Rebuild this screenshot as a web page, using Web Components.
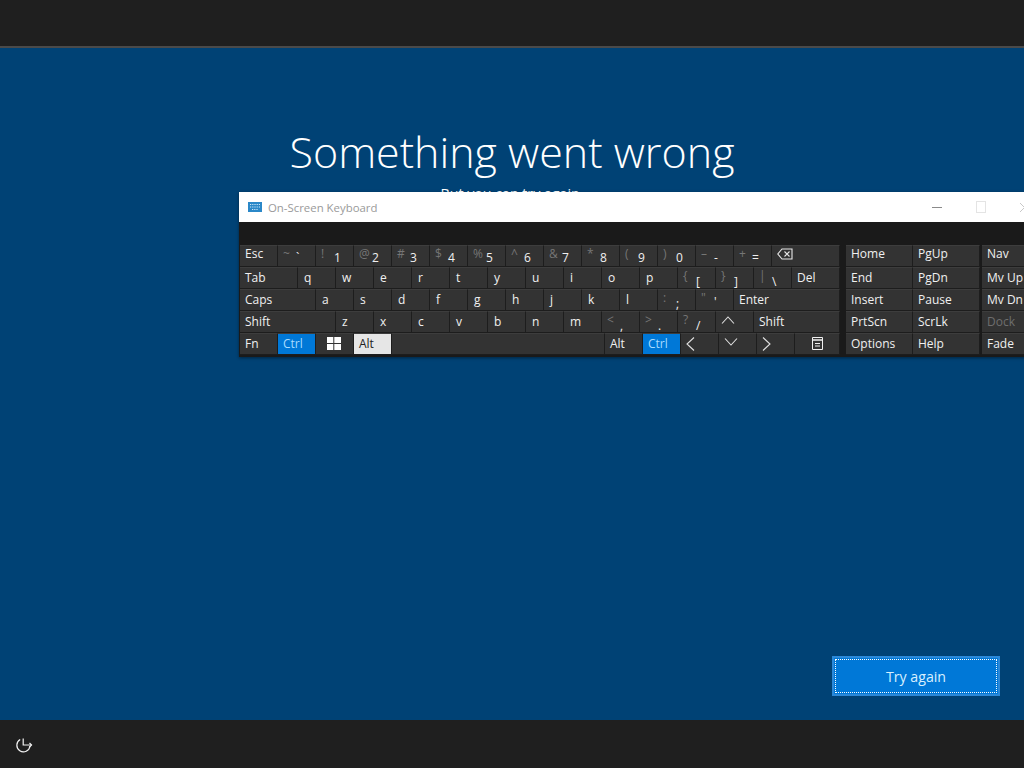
<!DOCTYPE html>
<html><head><meta charset="utf-8"><style>
html,body{margin:0;padding:0;width:1024px;height:768px;overflow:hidden;background:#004275}
</style></head><body>
<oobe-page>
<oobe-hero slot="hero" title-text="Something went wrong" sub="But you can try again."></oobe-hero>
<osk-window slot="win"></osk-window>
<oobe-button slot="action">Try again</oobe-button>
</oobe-page>
<script>
const FONT='"Open Sans","Noto Sans",sans-serif';
class OobePage extends HTMLElement{constructor(){super();this.attachShadow({mode:'open'}).innerHTML=`<style>
:host{display:flex;flex-direction:column;width:1024px;height:768px;position:relative;overflow:hidden;font-family:${FONT};color:#fff}
.top{height:46px;background:#1f1f1f;border-bottom:2px solid #4a4a4a;flex:none}
.main{flex:1;display:flex;flex-direction:column;justify-content:space-between;background:#004275;box-sizing:border-box;padding:73px 24px 24px 0}
.act{display:flex;justify-content:flex-end}
.bot{height:48px;box-sizing:border-box;background:#1f1f1f;flex:none;display:flex;align-items:center;padding:2px 0 0 15px}
.win{position:absolute;left:239px;top:192px}
svg{display:block}
</style><div class="top"></div><div class="main"><slot name="hero"></slot><div class="act"><slot name="action"></slot></div></div>
<div class="bot"><svg width="18" height="18" viewBox="0 0 18 18" fill="none" stroke="#f2f2f2" stroke-width="1.2"><path d="M15 10A6.600 6.600 0 1 1 5.200 3.500"/><path d="M8.200 2.500V9H16.500"/><path d="M14.500 7l2 2-2 2"/></svg></div>
<div class="win"><slot name="win"></slot></div>`}}
class OobeHero extends HTMLElement{constructor(){super();this.attachShadow({mode:'open'}).innerHTML=`<style>
:host{display:block;text-align:center;padding-left:24px}
h1{margin:0;font-weight:300;font-size:43px;line-height:62px;color:#fff}
p{margin:0;font-size:14.2px;line-height:22px;color:#fff}
</style><h1></h1><p></p>`}
connectedCallback(){const s=this.shadowRoot;s.querySelector('h1').textContent=this.getAttribute('title-text');s.querySelector('p').textContent=this.getAttribute('sub')}}
class OobeButton extends HTMLElement{constructor(){super();this.attachShadow({mode:'open'}).innerHTML=`<style>
:host{display:block;width:168px;height:40px;box-sizing:border-box;background:#0078d7;border:2px solid #2b88d8;padding:1px}
div{box-sizing:border-box;height:100%;border:1px dotted #fff;display:flex;align-items:center;justify-content:center;font-size:14.2px;color:#d8f0ff}
</style><div><slot></slot></div>`}}
class OskKey extends HTMLElement{constructor(){super();this.attachShadow({mode:'open'}).innerHTML=`<style>
:host{display:flex;box-sizing:border-box;height:22px;background:#333;border-right:1px solid #1d1d1d;border-bottom:1px solid #1d1d1d;border-top:1px solid #3d3d3d;padding-left:5px;font-size:12px;line-height:18px;color:#f0f0f0;overflow:hidden;flex:none}
:host([kind=blue]){background:#0078d7;color:#a8dcff}
:host([kind=light]){background:#e6e6e6;color:#222}
:host([kind=off]){color:#6e6e6e}
.sup{color:#767676;width:13px;flex:none;margin-top:-1px}
.main{margin-top:3px}
.main.plain{margin-top:-1px}
.main.down{margin-top:1px}
.main.low{margin-top:5px}
</style><span class="sup"></span><span class="main"><slot></slot></span>`}
connectedCallback(){const sup=this.getAttribute('sup');const m=this.shadowRoot.querySelector('.main'),s=this.shadowRoot.querySelector('.sup');
this.style.width=this.getAttribute('w')+'px';
if(this.hasAttribute('pl'))this.style.paddingLeft=this.getAttribute('pl')+'px';
if(this.hasAttribute('pt'))this.style.paddingTop=this.getAttribute('pt')+'px';
if(sup){s.textContent=sup;if(this.hasAttribute('low'))m.classList.add('low')}
else{s.remove();m.classList.add(this.hasAttribute('first')?'plain':'down');if(this.hasAttribute('pt'))m.style.margin='0'}}}
const ic={
win:'<svg width="14" height="13" viewBox="0 0 14 13" fill="#fff" style="display:block"><path d="M0 0h6.300v6H0zM7.300 0H14v6H7.300zM0 7h6.300v6H0zM7.300 7H14v6H7.300z"/></svg>',
back:'<svg width="16" height="12" viewBox="0 0 16 12" fill="none" stroke="#e8e8e8" stroke-width="1.100" style="display:block"><path d="M5 1h10v10H5L.8 6z"/><path d="M7.500 3.500l5 5M12.500 3.500l-5 5"/></svg>',
up:'<svg width="14" height="8" viewBox="0 0 14 8" fill="none" stroke="#e0e0e0" stroke-width="1.100" style="display:block"><path d="M1 7.500L7 1l6 6.500"/></svg>',
down:'<svg width="14" height="8" viewBox="0 0 14 8" fill="none" stroke="#e0e0e0" stroke-width="1.100" style="display:block"><path d="M1 .5L7 7l6-6.500"/></svg>',
left:'<svg width="9" height="14" viewBox="0 0 9 14" fill="none" stroke="#e0e0e0" stroke-width="1.100" style="display:block"><path d="M8 .5L1 7l7 6.500"/></svg>',
right:'<svg width="9" height="14" viewBox="0 0 9 14" fill="none" stroke="#e0e0e0" stroke-width="1.100" style="display:block"><path d="M1 .5L8 7l-7 6.500"/></svg>',
menu:'<svg width="11" height="13" viewBox="0 0 11 13" fill="none" stroke="#f0f0f0" style="display:block"><path d="M.5.500h10v12H.5z"/><path d="M.5 3h10" stroke-width="1.500"/><path d="M3 6.500h5M3 9h5"/></svg>'};
const k=(t,w,sup,extra='')=>`<osk-key w="${w}" ${sup?`sup="${sup.replace(/"/g,'&quot;')}"`:''} ${extra}>${t}</osk-key>`;
const I=(name,w,pl,pt)=>`<osk-key w="${w}" pl="${pl}" pt="${pt}">${ic[name]}</osk-key>`;
const L=(s,w=38)=>[...s].map(c=>k(c,w,'','pl="6"')).join('');
const num=[['~','`'],['!','1'],['@','2'],['#','3'],['$','4'],['%','5'],['^','6'],['&amp;','7'],['*','8'],['(','9'],[')','0'],['–','-'],['+','=']];
const rowsMain=[
 k('Esc',38,'','first')+num.map(([s,m])=>k(m,38,s)).join('')+I('back',68,5,2),
 k('Tab',58)+L('qwertyuiop')+k('[',38,'{','low')+k(']',38,'}','low')+k('\\',38,'|','low')+k('Del',48),
 k('Caps',76)+L('asdfghjkl')+k(';',38,':','low')+k("'",38,'"')+k('Enter',106),
 k('Shift',96)+L('zxcvbnm')+k(',',38,'&lt;','low')+k('.',38,'&gt;','low')+k('/',38,'?','low')+I('up',38,5,4)+k('Shift',86),
 k('Fn',38)+k('Ctrl',38,'','kind="blue"')+I('win',38,11,3)+k('Alt',38,'','kind="light"')+k('',213)+k('Alt',38)+k('Ctrl',38,'','kind="blue"')+I('left',38,5,3)+I('down',38,5,4)+I('right',38,5,3)+I('menu',45,17,3)
];
const rowsNav=[['Home','PgUp'],['End','PgDn'],['Insert','Pause'],['PrtScn','ScrLk'],['Options','Help']];
const rowsSide=['Nav','Mv Up','Mv Dn','Dock','Fade'];
class OskWindow extends HTMLElement{constructor(){super();this.attachShadow({mode:'open'}).innerHTML=`<style>
:host{display:block;width:790px;background:#1a1a1a;font-family:${FONT};box-shadow:0 1px 3px rgba(0,0,0,.45)}
.title{height:30px;background:#fff;display:flex;align-items:center;padding-left:9px;color:#9a9a9a;font-size:11.400px;gap:6px}
.title .txt{flex:1}
.ctl{display:flex;align-items:center;gap:34px;width:97px;flex:none}
.min{width:10px;height:1px;background:#8a8a8a}
.max{width:8px;height:10px;border:1px solid #e4e4e4;flex:none}
.cl{width:9px;height:9px;flex:none}
.band{height:23px}
.body{display:flex;padding:0 0 2px 1px}
.col{display:flex;flex-direction:column}
.row{display:flex}
.nav{margin-left:6px}
.side{margin-left:2px}
</style>
<div class="title"><svg width="14" height="10" viewBox="0 0 14 10"><rect width="14" height="10" fill="#2b88c8"/><path d="M2 2.500h10M2 5h10M4 7.500h6" stroke="#cfe8f8" stroke-width="1" stroke-dasharray="1 .8"/></svg><span class="txt">On-Screen Keyboard</span>
<div class="ctl"><span class="min"></span><span class="max"></span><svg class="cl" viewBox="0 0 9 9" stroke="#c8c8c8" fill="none"><path d="M0 0l9 9M9 0L0 9"/></svg></div></div>
<div class="band"></div>
<div class="body"><div class="col">${rowsMain.map(r=>`<div class="row">${r}</div>`).join('')}</div>
<div class="col nav">${rowsNav.map(([a,b],i)=>`<div class="row">${k(a,67,'',i?'':'first')}${k(b,67,'',i?'':'first')}</div>`).join('')}</div>
<div class="col side">${rowsSide.map((t,i)=>`<div class="row">${k(t,50,'',(t==='Dock'?'kind="off" ':'')+(i?'':'first'))}</div>`).join('')}</div></div>`}}
customElements.define('oobe-page',OobePage);customElements.define('oobe-hero',OobeHero);customElements.define('oobe-button',OobeButton);customElements.define('osk-key',OskKey);customElements.define('osk-window',OskWindow);
</script></body></html>
